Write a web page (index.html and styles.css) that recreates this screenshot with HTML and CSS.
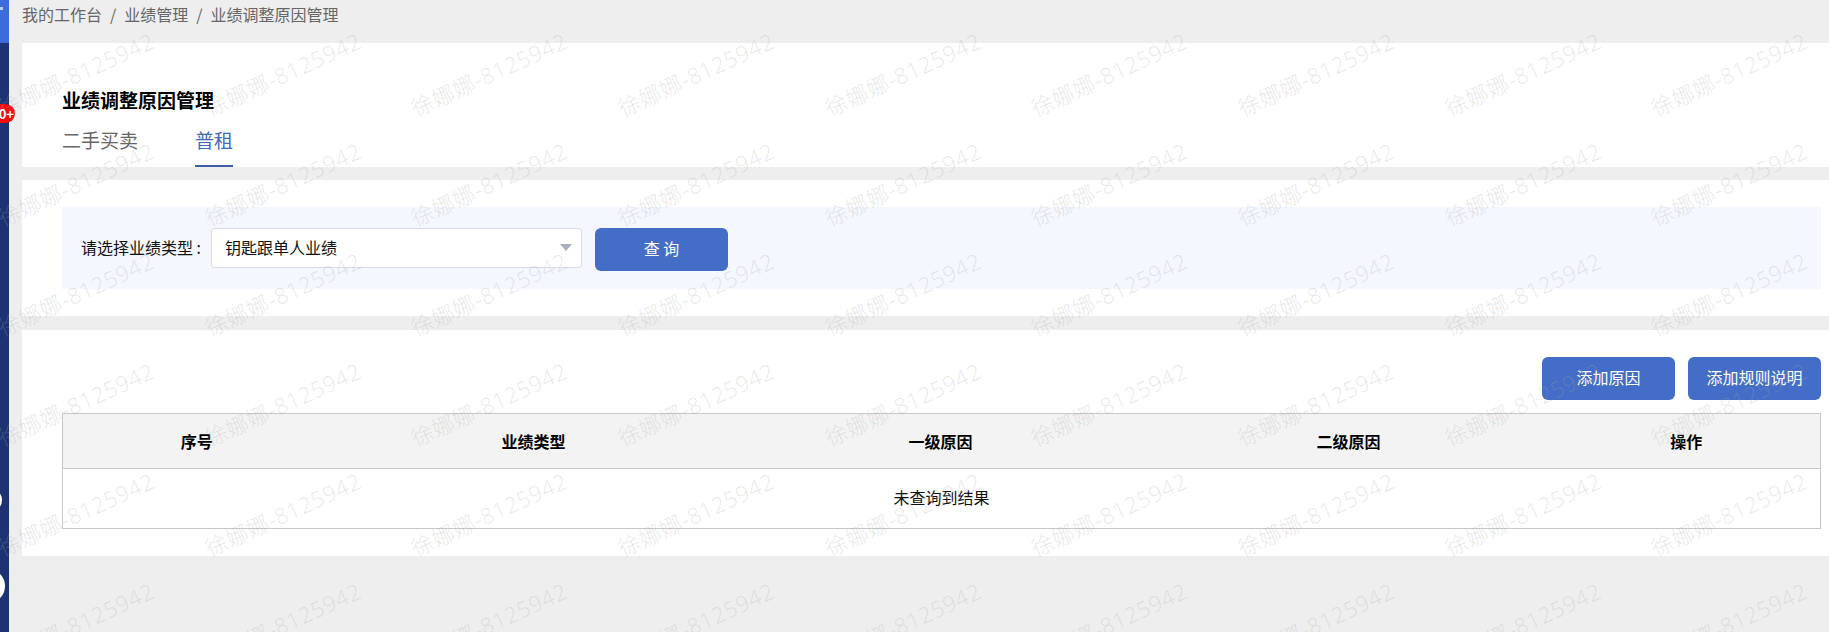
FILE: index.html

```html
<!DOCTYPE html>
<html lang="zh-CN">
<head>
	<meta charset="UTF-8">
	<meta name="viewport" content="width=device-width, initial-scale=1.0">
	<title>业绩调整原因管理</title>
	<link rel="stylesheet" href="styles.css">
</head>
<body>

<div class="layout">
	<aside class="sidebar">
		<div class="sidebar-top"><span class="sidebar-dot"></span></div>
		<span class="sidebar-knob knob-small"></span>
		<span class="sidebar-knob knob-big"></span>
	</aside>
	<span class="badge">10+</span>

	<main class="main">
		<div class="breadcrumb">
			<span>我的工作台</span><i>/</i><span>业绩管理</span><i>/</i><span>业绩调整原因管理</span>
		</div>

		<section class="card card-head">
			<h1>业绩调整原因管理</h1>
			<div class="tabs">
				<div class="tab">二手买卖</div>
				<div class="tab active">普租</div>
			</div>
		</section>

		<section class="card card-filter">
			<div class="filter-band">
				<label class="filter-label">请选择业绩类型 :</label>
				<div class="select">
					<span>钥匙跟单人业绩</span>
					<span class="select-arrow"></span>
				</div>
				<button class="btn btn-query">查 询</button>
			</div>
		</section>

		<section class="card card-table">
			<div class="actions">
				<button class="btn">添加原因</button>
				<button class="btn">添加规则说明</button>
			</div>
			<table class="result-table">
				<colgroup>
					<col class="col-index">
					<col class="col-type">
					<col class="col-reason">
					<col class="col-reason">
					<col>
				</colgroup>
				<thead>
					<tr>
						<th>序号</th>
						<th>业绩类型</th>
						<th>一级原因</th>
						<th>二级原因</th>
						<th>操作</th>
					</tr>
				</thead>
				<tbody>
					<tr>
						<td colspan="5">未查询到结果</td>
					</tr>
				</tbody>
			</table>
		</section>
	</main>
</div>

<div class="watermark" id="watermark"></div>

<script src="watermark.js"></script>

</body>
</html>
```

FILE: styles.css

```css
* {
	box-sizing: border-box;
}
html, body {
	height: 100%;
}
body {
	margin: 0;
	overflow: hidden;
	background: #eeeeee;
	font-family: "Noto Sans CJK SC", "Noto Sans", sans-serif;
	font-size: 16px;
	color: #222;
}
.layout {
	display: flex;
	min-height: 100%;
}

/* collapsed side menu, only its edge shows */
.sidebar {
	position: relative;
	flex: 0 0 9px;
	overflow: hidden;
	background: #1d3273;
}
.sidebar-top {
	height: 43px;
	background: #3c6cd9;
}
.sidebar-dot {
	display: block;
	width: 3px;
	height: 3px;
	background: #b9ccf2;
	transform: translateY(7px);
}
.sidebar-knob {
	position: absolute;
	background: #fff;
	border-radius: 50%;
}
.knob-small {
	left: -14px;
	top: 490px;
	width: 16px;
	height: 20px;
}
.knob-big {
	left: -24px;
	top: 570px;
	width: 29px;
	height: 32px;
}
.badge {
	position: absolute;
	left: -12px;
	top: 104px;
	width: 27px;
	height: 19px;
	border-radius: 10px;
	background: #f50c0c;
	color: #fff;
	font-size: 13px;
	font-weight: 700;
	line-height: 19px;
	text-align: right;
	padding-right: 1px;
	white-space: nowrap;
	overflow: hidden;
}

.main {
	flex: 1;
	min-width: 0;
	padding-left: 13px;
}
.breadcrumb {
	height: 43px;
	padding-top: 2px;
	line-height: 24px;
	color: #666;
}
.breadcrumb i {
	margin: 0 8px;
	font-style: normal;
}
.card {
	background: #fff;
	padding-left: 40px;
	padding-right: 8px;
}
.card-head {
	height: 124px;
	padding-top: 46px;
}
.card-head h1 {
	margin: 0;
	font-size: 19px;
	line-height: 22px;
	font-weight: 700;
	color: #000;
}
.tabs {
	display: flex;
	gap: 57px;
	margin-top: 17px;
}
.tab {
	padding-bottom: 13px;
	border-bottom: 2px solid transparent;
	font-size: 19px;
	line-height: 24px;
	color: #666;
}
.tab.active {
	color: #4468b8;
	border-bottom-color: #3f5ea8;
}

.card-filter {
	margin-top: 13px;
	padding-top: 27px;
	padding-bottom: 27px;
}
.filter-band {
	display: flex;
	align-items: flex-start;
	height: 82px;
	padding: 21px 0 0 19px;
	background: #f4f7fe;
}
.filter-label {
	width: 130px;
	line-height: 38px;
	font-size: 16px;
	color: #111;
}
.select {
	display: flex;
	align-items: center;
	justify-content: space-between;
	width: 371px;
	height: 40px;
	padding: 0 9px 2px 13px;
	background: #fff;
	border: 1px solid #d8dbe8;
	border-radius: 3px;
	font-size: 16px;
	color: #111;
}
.select-arrow {
	width: 0;
	height: 0;
	border-left: 6px solid transparent;
	border-right: 6px solid transparent;
	border-top: 7px solid #a9aec0;
}
.btn {
	width: 133px;
	height: 43px;
	padding: 0 0 3px;
	border: none;
	border-radius: 6px;
	background: #436dc6;
	color: #fff;
	font-family: inherit;
	font-size: 16px;
	cursor: pointer;
}
.btn-query {
	margin-left: 13px;
}

.card-table {
	margin-top: 14px;
	padding-top: 27px;
	padding-bottom: 27px;
}
.actions {
	display: flex;
	justify-content: flex-end;
	gap: 13px;
	margin-bottom: 13px;
}
.result-table {
	width: 100%;
	table-layout: fixed;
	border-collapse: collapse;
	border: 1px solid #c8c8c8;
}
.col-index {
	width: 268px;
}
.col-type {
	width: 406px;
}
.col-reason {
	width: 408px;
}
.result-table th {
	height: 55px;
	background: #f3f3f3;
	border-bottom: 1px solid #c8c8c8;
	font-weight: 700;
	color: #000;
}
.result-table td {
	height: 60px;
	padding-bottom: 4px;
	text-align: center;
	color: #111;
}

/* user name watermark on top of the whole page */
.watermark {
	position: absolute;
	left: -28px;
	top: 18px;
	bottom: 0;
	overflow: hidden;
	display: grid;
	grid-template-columns: repeat(9, 206.67px);
	grid-auto-rows: 110px;
	pointer-events: none;
}
.watermark-item {
	display: flex;
	align-items: center;
	justify-content: center;
	font-family: "Open Sans", "Noto Sans CJK SC", sans-serif;
	font-size: 22px;
	font-weight: 300;
	letter-spacing: 0.7px;
	color: rgba(170, 170, 170, 0.28);
	white-space: nowrap;
	transform: rotate(-24.5deg);
}
```

FILE: watermark.js

```js
// Fill the overlay with one label per grid cell
const box = document.getElementById('watermark');
for (let i = 0; i < 54; i++) {
	const item = document.createElement('span');
	item.className = 'watermark-item';
	item.textContent = '徐娜娜-8125942';
	box.appendChild(item);
}
```
